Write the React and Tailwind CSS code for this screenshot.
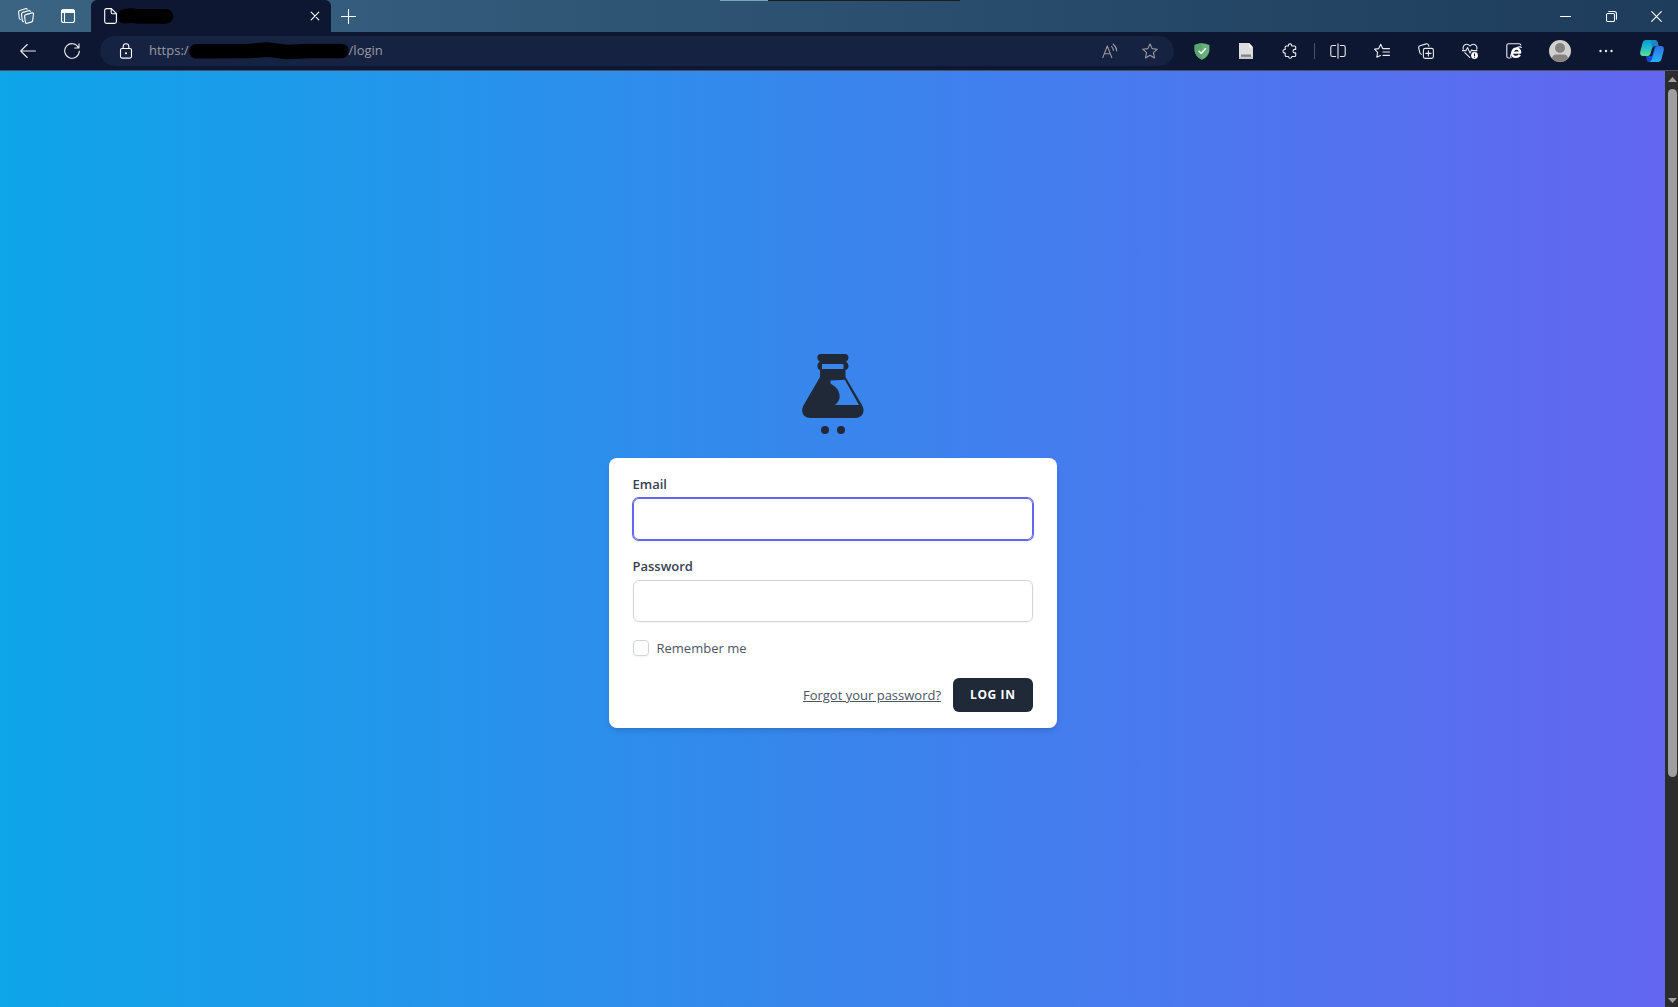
import React from "react";

function Icon({ size = 16, className = "", children, ...rest }) {
  return (
    <svg
      width={size}
      height={size}
      viewBox={`0 0 ${size} ${size}`}
      fill="none"
      stroke="currentColor"
      strokeWidth="1.1"
      strokeLinecap="round"
      strokeLinejoin="round"
      className={`shrink-0 ${className}`}
      aria-hidden="true"
      {...rest}
    >
      {children}
    </svg>
  );
}

function BarButton({ label, wide = false, children }) {
  return (
    <button
      type="button"
      aria-label={label}
      className={`flex h-8 shrink-0 items-center justify-center ${wide ? "w-12" : "w-11"}`}
    >
      {children}
    </button>
  );
}

function TitleBar() {
  return (
    <header className="relative flex h-8 items-center bg-linear-to-r/srgb from-[#3b6483] via-[#2b5070] to-[#1e3c5b] text-white">
      <div className="absolute left-[720px] top-0 flex h-px w-60">
        <span className="w-12 bg-[#73a9b6]" />
        <span className="grow bg-[#1d1d1f]" />
      </div>
      <div className="flex w-[91px] shrink-0 items-center pl-1.5">
        <button type="button" aria-label="Workspaces" className="flex w-10 justify-center">
          <Icon>
            <path d="M8 6.6 14 4.9Q15.6 4.6 15.5 6L14.6 12.9Q14.5 13.6 13.8 13.9L9 15.3Q7.6 15.7 7.4 14.3L6.6 8.2Q6.5 7 8 6.6Z" />
            <path d="M5.4 13.6Q4.4 13.4 4.3 12.6L3.5 6.1Q3.4 4.9 4.7 4.4L10.6 2.7Q12 2.4 12.3 3.4" />
            <path d="M2.3 11.4Q1.4 11.1 1.3 10.3L.6 4.2Q.5 2.9 1.8 2.5L7.4.8Q8.8.4 9.2 1.3" />
          </Icon>
        </button>
        <button type="button" aria-label="Tab actions menu" className="flex w-11 justify-center">
          <Icon>
            <rect x="1.5" y="1.5" width="13" height="13" rx="2" />
            <path d="M2 3.2Q2 2 3.2 2H12.8Q14 2 14 3.2V4.5H2Z" fill="currentColor" />
            <path d="M4.5 5V14.5" />
          </Icon>
        </button>
      </div>
      <div className="flex h-8 w-60 shrink-0 items-center rounded-t-md bg-[#0e1731] pl-[11px] pr-2">
        <Icon size={16}>
          <path d="M4.5.6H9.4L14.4 5.6V13.6Q14.4 15.4 12.6 15.4H4.5Q2.7 15.4 2.7 13.6V2.4Q2.7.6 4.5.6Z" />
          <path d="M9.2.8V4.4Q9.2 5.8 10.6 5.8H14.2" />
        </Icon>
        <svg width="56" height="16" viewBox="0 0 56 16" className="shrink-0" aria-hidden="true">
          <path d="M6.800 8.3 13 7.6 20 8.4H48" fill="none" stroke="#000" strokeWidth="14.6" strokeLinecap="round" strokeLinejoin="round" />
        </svg>
        <button type="button" aria-label="Close tab" className="ml-auto flex size-4 items-center justify-center">
          <Icon size={10}>
            <path d="M1.2 1.2 8.8 8.8M8.8 1.2 1.2 8.8" />
          </Icon>
        </button>
      </div>
      <button type="button" aria-label="New tab" className="flex h-8 w-[34px] items-center justify-center">
        <Icon size={15}>
          <path d="M.5 7.5H14.5M7.5.5V14.5" />
        </Icon>
      </button>
      <div className="ml-auto flex items-center">
        <button type="button" aria-label="Minimize" className="flex h-8 w-[46px] items-center justify-center">
          <Icon size={11}>
            <path d="M.5 5.5H10.5" />
          </Icon>
        </button>
        <button type="button" aria-label="Restore" className="flex h-8 w-[46px] items-center justify-center">
          <Icon size={11}>
            <rect x=".5" y="2.5" width="8" height="8" rx="1.2" />
            <path d="M2.8.5H8.3Q10.5.5 10.5 2.7V8.2" />
          </Icon>
        </button>
        <button type="button" aria-label="Close" className="flex h-8 w-11 items-center justify-center">
          <Icon size={11}>
            <path d="M.7.7 10.3 10.3M10.3.7.7 10.3" />
          </Icon>
        </button>
      </div>
    </header>
  );
}

function AddressBar() {
  return (
    <div className="mx-1.5 flex h-[30px] grow items-center rounded-full bg-[#162242] pl-[18px] pr-1 text-[13px] text-[#9a9ba3]">
      <Icon className="text-white">
        <rect x="2.5" y="5.5" width="11" height="9.6" rx="1.6" />
        <path d="M5.2 5.3V3.6Q5.2.7 8 .7T10.8 3.6V5.3" />
        <circle cx="8" cy="10.3" r=".7" fill="currentColor" stroke="none" />
        <circle cx="8" cy="10.3" r=".4" />
      </Icon>
      <span className="ml-[15px]">https:/</span>
      <svg width="160" height="18" viewBox="0 0 160 18" className="shrink-0" aria-hidden="true">
        <path d="M7.400 9.3 60 9 78 7.6 98 10 120 9H152.500" fill="none" stroke="#000" strokeWidth="14.6" strokeLinecap="round" strokeLinejoin="round" />
      </svg>
      <span>/login</span>
      <button type="button" aria-label="Read aloud" className="ml-auto flex w-10 justify-center">
        <Icon>
          <path d="M.8 14.6 5.3 3 9.8 14.6M2.4 10.8H8.2" />
          <path d="M9.6 3.6Q11.2 5 11.4 7.4M11.2 1.2Q14.4 3.6 14.8 8" />
        </Icon>
      </button>
      <button type="button" aria-label="Add this page to favorites" className="flex w-10 justify-center">
        <Icon>
          <path d="M8 .9 10.1 5.6 15.3 6.2 11.4 9.7 12.5 14.9 8 12.3 3.5 14.9 4.6 9.7.7 6.2 5.9 5.6Z" />
        </Icon>
      </button>
    </div>
  );
}

function Toolbar() {
  return (
    <nav aria-label="Browser toolbar" className="flex h-[39px] items-center border-b border-[#4d4f60] bg-[#0e1731] pl-1.5 pr-0.5 text-[#e9ebf0]">
      <BarButton label="Back">
        <Icon>
          <path d="M15.400 8H.7M7.200 1.500.7 8 7.200 14.500" />
        </Icon>
      </BarButton>
      <BarButton label="Refresh">
        <Icon>
          <path d="M14.600 4.800A7.300 7.300 0 1 0 15.300 8M15 .7V5H10.700" />
        </Icon>
      </BarButton>
      <AddressBar />
      <BarButton label="Ad blocker">
        <svg width="16" height="17" viewBox="0 0 16 17" aria-hidden="true">
          <path d="M8 .3Q11.6.4 15.4 2V7.4Q15 13.2 8 16.8 1 13.2.6 7.4V2Q4.4.4 8 .3Z" fill="#67b279" />
          <path d="M8 .3Q4.4.4.6 2V7.4Q1 13.2 8 16.8Z" fill="#5aa56c" />
          <path d="M4.6 7.8 7.2 10.4 11.8 5.2" fill="none" stroke="#fff" strokeWidth="1.5" />
        </svg>
      </BarButton>
      <BarButton label="Page extension">
        <svg width="16" height="16" viewBox="0 0 16 16" aria-hidden="true">
          <path d="M1 0H11L15 4.2V16H1Z" fill="#dedede" />
          <path d="M11 0V4.2H15Z" fill="#fff" />
          <path d="M1 13.5H15V16H1Z" fill="#c9c9c9" />
          <path d="M3 11.5H13V13.8H3Z" fill="#808387" />
        </svg>
      </BarButton>
      <BarButton label="Extensions">
        <Icon>
          <path d="M4.2 3H6.400Q6.200.9 8 .9T9.700 3H12.600Q13.700 3 13.700 4.100V6.400H12.500Q11 6.600 11 8.200T12.500 9.900H13.700V12.400Q13.700 13.500 12.600 13.500H9.800Q9.800 15.300 8.200 15.300T6.500 13.500H4.200Q3.200 13.500 3.200 12.500V10Q1 10 1 8.200T3.200 6.400V4Q3.200 3 4.200 3Z" />
        </Icon>
      </BarButton>
      <span className="flex w-1 shrink-0 justify-center">
        <span className="h-4 w-px bg-[#4a5069]" />
      </span>
      <BarButton label="Split screen">
        <Icon>
          <path d="M8 .8V15.2" />
          <path d="M5.6 2.5H2.6Q.8 2.5.8 4.3V11.7Q.8 13.5 2.6 13.5H5.6M10.4 2.5H13.4Q15.2 2.5 15.2 4.3V11.7Q15.2 13.5 13.4 13.5H10.4" />
        </Icon>
      </BarButton>
      <BarButton label="Favorites">
        <Icon>
          <path d="M9.7 5.6H8.7L6.7 1.2 4.7 5.6.6 6.1 3.6 9.3 2.8 14.3 6.4 12.4M9.7 5.6H15.5M9 9H15.5M9 12.4H15.5" />
        </Icon>
      </BarButton>
      <BarButton label="Collections">
        <Icon>
          <rect x="5.4" y="5.4" width="10" height="10" rx="1.8" />
          <path d="M10.4 7.8V13M7.8 10.4H13" />
          <path d="M3.4 11.3Q2.2 11 1.8 9.6L.7 5Q.3 3.2 2 2.7L8.2.9Q9.9.5 10.5 2L10.9 3.3" />
        </Icon>
      </BarButton>
      <BarButton label="Browser essentials">
        <Icon>
          <path d="M1.3 6.3Q.6 3.9 2.3 2.2 5.2-.1 8 3 10.8-.1 13.7 2.2 15.4 3.9 14.7 6.3M2.8 9.6 7.7 14.4" />
          <path d="M.5 7.6H4L5.6 4.6 8 10 9.8 6.8 10.6 7.6H15" />
          <circle cx="12.5" cy="12.5" r="3.4" fill="#fff" stroke="none" />
          <path d="M12.5 10.7V12.7M12.5 14.2V14.3" stroke="#0e1731" />
        </Icon>
      </BarButton>
      <BarButton label="Internet Explorer mode">
        <Icon>
          <path d="M3.5 15H2.6Q.8 15 .8 13.2V2.6Q.8.8 2.6.8H13.2Q14.6.8 14.8 2.2" />
          <path d="M6.3 9.6H14.2Q13.9 5.6 10.4 5.6T6.2 9.8 10.2 13.8Q12.8 13.8 13.8 11.7" stroke="#fff" strokeWidth="2.3" strokeLinecap="butt" />
          <path d="M5 14.8Q3.6 12.4 8 7.4T15.3 4.4" stroke="#fff" />
        </Icon>
      </BarButton>
      <BarButton label="Profile" wide>
        <svg width="22" height="22" viewBox="0 0 22 22" aria-hidden="true">
          <circle cx="11" cy="11" r="11" fill="#d2d0ce" />
          <circle cx="11" cy="8" r="5" fill="#85827f" />
          <path d="M2.8 18.2Q4 14.4 7 14.4H15Q18 14.4 19.2 18.2A11 11 0 0 1 2.8 18.2Z" fill="#85827f" />
        </svg>
      </BarButton>
      <BarButton label="Settings and more">
        <Icon size={14}>
          <g fill="currentColor" stroke="none">
            <circle cx="1.5" cy="7" r="1.2" />
            <circle cx="7" cy="7" r="1.2" />
            <circle cx="12.5" cy="7" r="1.2" />
          </g>
        </Icon>
      </BarButton>
      <BarButton label="Copilot" wide>
        <svg width="24" height="22" viewBox="0 0 24 22" aria-hidden="true">
          <defs>
            <linearGradient id="cop-a" x1="0" y1="0" x2="0" y2="1">
              <stop offset="0" stopColor="#0c9bd8" />
              <stop offset=".5" stopColor="#21bcc8" />
              <stop offset="1" stopColor="#5fdf94" />
            </linearGradient>
            <linearGradient id="cop-b" x1="0" y1="0" x2="0" y2="1">
              <stop offset="0" stopColor="#2f6fe4" />
              <stop offset="1" stopColor="#23b5f5" />
            </linearGradient>
          </defs>
          <path d="M6 16H12L15 6H20L16 20Q15 22 12 22H9Q7 22 6.5 19Z" fill="#1747cf" />
          <path d="M5.5 0H15Q17 0 17.6 2.5L18.5 6H15Q12.6 6 12 8.4L10.4 14Q9.8 16 7.6 16H3Q-.6 16 .3 11.5L2.5 3Q3.4 0 5.5 0Z" fill="url(#cop-a)" />
          <path d="M11 0H15Q17 0 17.6 2.5L18.5 6H15Q12.6 6 12 8.4Z" fill="#1686c4" />
          <path d="M18.5 22H9Q11.4 21.6 12 19L15 8.5Q15.7 6 18 6H21Q24.6 6 23.7 10.5L21.5 19Q20.6 22 18.5 22Z" fill="url(#cop-b)" />
        </svg>
      </BarButton>
    </nav>
  );
}

function FlaskLogo() {
  return (
    <svg viewBox="13 14 80 80" className="size-20 fill-[#1f2937]" role="img" aria-label="Flask logo">
      <path
        fillRule="evenodd"
        d="M40 14H65.500Q68.500 14.500 68.500 17.500T66 21.500Q68.500 23 68.500 26T65.500 30V37L82.500 66Q85 72 81.500 75.500 79 78 75 78H30.500Q26.500 78 24 75.500 20.800 72 23.200 66L40 37V30Q37.300 29 37.300 26T39.800 21.500Q37.300 20.500 37.300 17.500T40 14ZM42 24V29H63.500V24ZM50.500 40.500V43.500Q58.500 48 59.500 54.500 60.500 61 54.800 65H79L64.800 39.800Z"
      />
      <circle cx="45" cy="90" r="4" />
      <circle cx="61" cy="90" r="4" />
    </svg>
  );
}

function LoginCard() {
  return (
    <form
      onSubmit={(e) => e.preventDefault()}
      className="mt-6 w-full max-w-md rounded-lg bg-white px-6 py-4 text-[13px] leading-5 shadow-md"
    >
      <label htmlFor="email" className="block font-semibold text-[#374151]">
        Email
      </label>
      <input
        id="email"
        type="email"
        className="mt-1 block h-[42px] w-full rounded-md border border-[#6366f1] px-3 text-base shadow-sm outline-none ring-1 ring-[#6366f1]"
      />
      <label htmlFor="password" className="mt-4 block font-semibold text-[#374151]">
        Password
      </label>
      <input
        id="password"
        type="password"
        className="mt-1 block h-[42px] w-full rounded-md border border-[#d1d5db] px-3 text-base shadow-xs outline-none focus:border-[#6366f1]"
      />
      <div className="mt-4 flex h-6">
        <label className="flex h-5 items-center gap-2 text-[#4b5563]">
          <input
            type="checkbox"
            className="size-4 appearance-none rounded border border-[#d1d5db] bg-white shadow-xs checked:bg-[#4f46e5]"
          />
          Remember me
        </label>
      </div>
      <div className="mt-4 flex items-center justify-end gap-3">
        <a href="#forgot" className="text-[#4b5563] underline">
          Forgot your password?
        </a>
        <button
          type="submit"
          className="rounded-md border border-transparent bg-[#1f2937] px-4 py-2 text-xs font-bold uppercase tracking-wider text-white"
        >
          Log in
        </button>
      </div>
    </form>
  );
}

function Scrollbar() {
  return (
    <div aria-hidden="true" className="flex w-[13px] shrink-0 flex-col items-center bg-[#2c2c2c] pl-px text-[#9f9f9f]">
      <svg width="9" height="18" viewBox="0 0 9 18" fill="currentColor">
        <path d="M0 11H9L4.500 6Z" />
      </svg>
      <div className="w-[9px] grow-[688] basis-0 rounded-full bg-current" />
      <div className="grow-[215] basis-0" />
      <svg width="9" height="15" viewBox="0 0 9 15" fill="currentColor">
        <path d="M0 6H9L4.500 11Z" />
      </svg>
    </div>
  );
}

export default function App() {
  return (
    <div className="flex min-h-screen flex-col font-['Open_Sans','Noto_Sans',sans-serif]">
      <TitleBar />
      <Toolbar />
      <div className="flex grow">
        <main className="flex grow flex-col items-center justify-center bg-linear-to-r/srgb from-[#0ea5e9] to-[#6366f1] pt-1">
          <a href="#home" aria-label="Home">
            <FlaskLogo />
          </a>
          <LoginCard />
        </main>
        <Scrollbar />
      </div>
    </div>
  );
}
